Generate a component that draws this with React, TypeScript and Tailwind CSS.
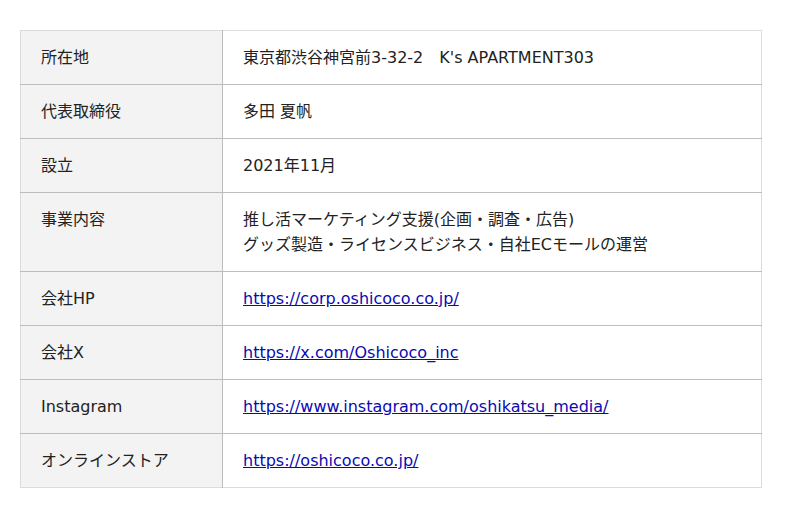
const ROWS: { label: string; lines?: string[]; href?: string }[] = [
  { label: "所在地", lines: ["東京都渋谷神宮前3-32-2\u3000K's APARTMENT303"] },
  { label: "代表取締役", lines: ["多田 夏帆"] },
  { label: "設立", lines: ["2021年11月"] },
  {
    label: "事業内容",
    lines: [
      "推し活マーケティング支援(企画・調査・広告)",
      "グッズ製造・ライセンスビジネス・自社ECモールの運営",
    ],
  },
  { label: "会社HP", href: "https://corp.oshicoco.co.jp/" },
  { label: "会社X", href: "https://x.com/Oshicoco_inc" },
  { label: "Instagram", href: "https://www.instagram.com/oshikatsu_media/" },
  { label: "オンラインストア", href: "https://oshicoco.co.jp/" },
];

export default function App() {
  return (
    <div className="min-h-[518px] w-[800px] bg-white pt-[30px] pl-[20px] font-['DejaVu_Sans','Noto_Sans_CJK_JP',sans-serif] text-[16px] leading-[25px] text-[#222]">
      <table className="w-[742px] border-collapse border border-[#dcdcdc]">
        <tbody>
          {ROWS.map((r, i) => (
            <tr
              key={r.label}
              className={i < ROWS.length - 1 ? "border-b border-[#bdbdbd]" : ""}
            >
              <th className="w-[202px] border-r border-[#bdbdbd] bg-[#f3f3f3] px-[20px] py-[14px] text-left align-top font-normal">
                {r.label}
              </th>
              <td className="px-[20px] py-[14px] align-top">
                {r.href ? (
                  <a href={r.href} className="text-[#0a0ab0] underline">
                    {r.href}
                  </a>
                ) : (
                  r.lines?.map((l) => <div key={l}>{l}</div>)
                )}
              </td>
            </tr>
          ))}
        </tbody>
      </table>
    </div>
  );
}
